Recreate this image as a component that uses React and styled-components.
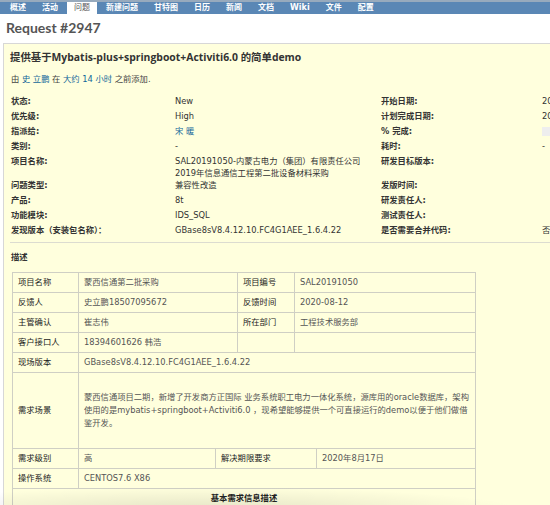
import React from "react";
import styled, { createGlobalStyle } from "styled-components";

const GlobalStyle = createGlobalStyle`
  html, body {
    margin: 0;
    padding: 0;
    overflow: hidden;
    background: #fff;
  }
  body {
    font-family: "DejaVu Sans", "Noto Sans CJK SC", sans-serif;
    font-size: 8.3px;
    color: #333;
  }
`;

const Page = styled.div`
  position: relative;
  width: 550px;
  height: 505px;
  overflow: hidden;
`;

const TopLine = styled.div`
  height: 2px;
  background: #97aabd;
`;

const Menu = styled.ul`
  display: flex;
  gap: 2px;
  margin: 0;
  padding: 0 0 0 3px;
  list-style: none;
  height: 12px;
  background: #5a87b5;
`;

const Tab = styled.li`
  padding: 0 7px;
  font-size: 8px;
  line-height: 12px;
  font-weight: ${(p) => (p.$selected ? "normal" : "bold")};
  color: ${(p) => (p.$selected ? "#555" : "#fff")};
  background: ${(p) => (p.$selected ? "#fff" : "transparent")};
  white-space: nowrap;
`;

const Content = styled.div`
  padding: 0 3px;
`;

const Title = styled.h2`
  margin: 5px 0 6px 3px;
  font-family: Lato, "Noto Sans CJK SC", sans-serif;
  font-size: 14px;
  line-height: 18px;
  font-weight: bold;
  color: #555;
`;

const IssueBox = styled.div`
  width: 760px;
  padding: 6px;
  background: #ffffdd;
  border: 1px solid #d7d7d7;
`;

const Subject = styled.h3`
  margin: 0;
  font-family: "Open Sans", "Noto Sans CJK SC", sans-serif;
  font-size: 10.4px;
  line-height: 14px;
  font-weight: bold;
  color: #333;
`;

const Author = styled.p`
  margin: 9px 0 0 1px;
  line-height: 12px;
  color: #444;
`;

const Link = styled.a`
  color: #169;
  text-decoration: none;
`;

const Attributes = styled.div`
  display: grid;
  grid-template-columns: 165px 205px 162px 1fr;
  grid-auto-rows: minmax(15px, auto);
  margin-top: 10px;
  line-height: 12px;
`;

const Label = styled.div`
  padding-left: 1px;
  font-weight: bold;
  color: #333;
  white-space: nowrap;
`;

const Value = styled.div`
  color: #333;
  white-space: nowrap;
`;

const Progress = styled.div`
  width: 100px;
  height: 9px;
  margin-top: 2px;
  background: #eeeeee;
`;

const Rule = styled.hr`
  margin: 3px 0 0;
  border: 0;
  border-top: 1px solid #dcdcd0;
`;

const Heading = styled.p`
  margin: 8px 0 9px 1px;
  line-height: 12px;
  font-weight: bold;
  color: #333;
`;

const Table = styled.table`
  width: 463px;
  margin-left: 2px;
  border-collapse: collapse;
  table-layout: fixed;
`;

const Cell = styled.td`
  padding: ${(p) => (p.$tall ? "18px 5px" : "4px 5px")};
  line-height: ${(p) => (p.$tall ? "13px" : "11px")};
  border: 1px solid #cfcfc4;
  color: ${(p) => (p.$label ? "#222" : "#555")};
  font-weight: ${(p) => (p.$strong ? "bold" : "normal")};
  text-align: ${(p) => (p.$center ? "center" : "left")};
  vertical-align: middle;
  white-space: nowrap;
  overflow: hidden;
`;

const Shade = styled.div`
  position: absolute;
  left: 0;
  bottom: 0;
  width: 550px;
  height: 26px;
  pointer-events: none;
  background: radial-gradient(ellipse 320px 22px at 200px 30px, rgba(0, 0, 0, 0.1), rgba(0, 0, 0, 0));
`;

const tabs = ["概述", "活动", "问题", "新建问题", "甘特图", "日历", "新闻", "文档", "Wiki", "文件", "配置"];

const attrs = [
  ["状态:", "New", "开始日期:", "2020-08-12"],
  ["优先级:", "High", "计划完成日期:", "2020-08-17"],
  ["指派给:", "宋 暖", "% 完成:", "progress"],
  ["类别:", "-", "耗时:", "-"],
  ["项目名称:", "multi", "研发目标版本:", ""],
  ["问题类型:", "兼容性改造", "发版时间:", ""],
  ["产品:", "8t", "研发责任人:", ""],
  ["功能模块:", "IDS_SQL", "测试责任人:", ""],
  ["发现版本（安装包名称）：", "GBase8sV8.4.12.10.FC4G1AEE_1.6.4.22", "是否需要合并代码:", "否"],
];

function renderValue(v) {
  if (v === "宋 暖") return <Link href="#">宋 暖</Link>;
  if (v === "multi")
    return (
      <>
        SAL20191050-内蒙古电力（集团）有限责任公司
        <br />
        2019年信息通信工程第二批设备材料采购
      </>
    );
  return v;
}

export default function App() {
  return (
    <Page>
      <GlobalStyle />
      <TopLine />
      <Menu>
        {tabs.map((t) => (
          <Tab key={t} $selected={t === "问题"}>
            {t}
          </Tab>
        ))}
      </Menu>
      <Content>
        <Title>Request #2947</Title>
        <IssueBox>
          <Subject>提供基于Mybatis-plus+springboot+Activiti6.0 的简单demo</Subject>
          <Author>
            由 <Link href="#">史 立鹏</Link> 在 <Link href="#">大约 14 小时</Link> 之前添加.
          </Author>
          <Attributes>
            {attrs.map(([l1, v1, l2, v2]) => (
              <React.Fragment key={l1}>
                <Label>{l1}</Label>
                <Value>{renderValue(v1)}</Value>
                <Label>{l2}</Label>
                <Value>{v2 === "progress" ? <Progress /> : v2}</Value>
              </React.Fragment>
            ))}
          </Attributes>
          <Rule />
          <Heading>描述</Heading>
          <Table>
            <colgroup>
              <col style={{ width: 66 }} />
              <col style={{ width: 137 }} />
              <col style={{ width: 22 }} />
              <col style={{ width: 57 }} />
              <col style={{ width: 22 }} />
              <col style={{ width: 159 }} />
            </colgroup>
            <tbody>
              <tr>
                <Cell $label>项目名称</Cell>
                <Cell colSpan={2}>蒙西信通第二批采购</Cell>
                <Cell $label>项目编号</Cell>
                <Cell colSpan={2}>SAL20191050</Cell>
              </tr>
              <tr>
                <Cell $label>反馈人</Cell>
                <Cell colSpan={2}>史立鹏18507095672</Cell>
                <Cell $label>反馈时间</Cell>
                <Cell colSpan={2}>2020-08-12</Cell>
              </tr>
              <tr>
                <Cell $label>主管确认</Cell>
                <Cell colSpan={2}>崔志伟</Cell>
                <Cell $label>所在部门</Cell>
                <Cell colSpan={2}>工程技术服务部</Cell>
              </tr>
              <tr>
                <Cell $label>客户接口人</Cell>
                <Cell colSpan={2}>18394601626 韩浩</Cell>
                <Cell $label></Cell>
                <Cell colSpan={2}></Cell>
              </tr>
              <tr>
                <Cell $label>现场版本</Cell>
                <Cell colSpan={5}>GBase8sV8.4.12.10.FC4G1AEE_1.6.4.22</Cell>
              </tr>
              <tr>
                <Cell $label>需求场景</Cell>
                <Cell colSpan={5} $tall>
                  蒙西信通项目二期，新增了开发商方正国际 业务系统职工电力一体化系统，源库用的oracle数据库，架构
                  <br />
                  使用的是mybatis+springboot+Activiti6.0 ，现希望能够提供一个可直接运行的demo以便于他们做借
                  <br />
                  鉴开发。
                </Cell>
              </tr>
              <tr>
                <Cell $label>需求级别</Cell>
                <Cell>高</Cell>
                <Cell $label colSpan={3}>解决期限要求</Cell>
                <Cell>2020年8月17日</Cell>
              </tr>
              <tr>
                <Cell $label>操作系统</Cell>
                <Cell colSpan={5}>CENTOS7.6 X86</Cell>
              </tr>
              <tr>
                <Cell $label $strong $center colSpan={6}>
                  基本需求信息描述
                </Cell>
              </tr>
            </tbody>
          </Table>
        </IssueBox>
      </Content>
      <Shade />
    </Page>
  );
}
